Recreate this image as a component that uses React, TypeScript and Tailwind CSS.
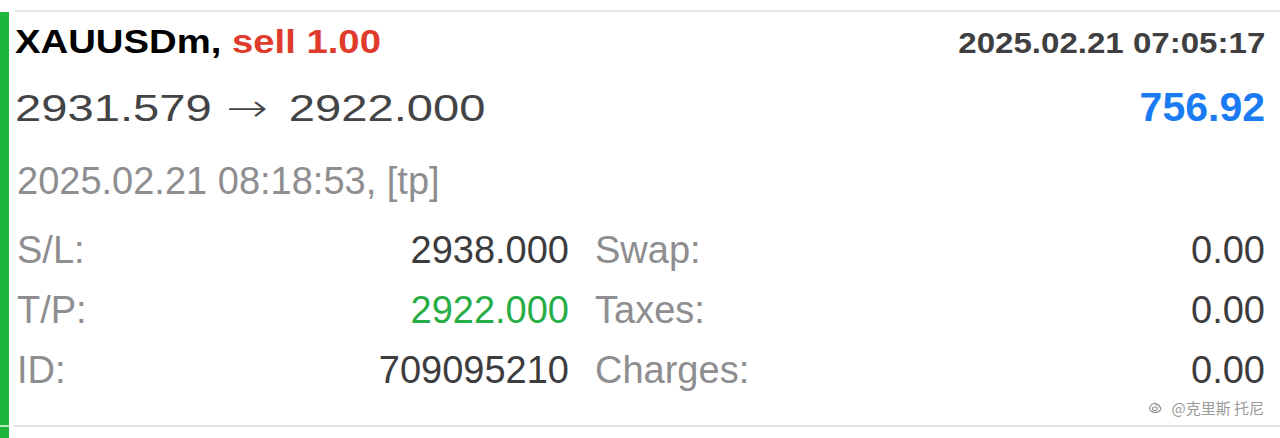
import React from "react";

const FONT = "font-['Liberation_Sans',Arial,sans-serif]";

type Row = {
  label: string;
  value: string;
  valueClass?: string;
  label2: string;
  value2: string;
};

const ROWS: Row[] = [
  { label: "S/L:", value: "2938.000", label2: "Swap:", value2: "0.00" },
  { label: "T/P:", value: "2922.000", valueClass: "text-[#27ad45]", label2: "Taxes:", value2: "0.00" },
  { label: "ID:", value: "709095210", label2: "Charges:", value2: "0.00" },
];

function WeiboMark() {
  return (
    <svg width="15" height="15" viewBox="0 0 14 14" fill="none" aria-hidden="true">
      <path
        d="M6.2 3.2C3.6 3.6 1.6 5.6 1.6 7.8c0 2.3 2.4 3.8 5 3.8 3 0 5.4-1.7 5.4-3.6 0-1.2-1-1.7-1.7-1.8.4-1 .1-2-1.3-1.8l-1.1.3c.3-1 0-1.7-1.7-1.5z"
        stroke="#8f8f8f"
        strokeWidth="1.1"
      />
      <ellipse cx="6.4" cy="8.2" rx="2.2" ry="1.6" stroke="#8f8f8f" strokeWidth="1" />
    </svg>
  );
}

export default function App() {
  return (
    <div className={`w-[1280px] h-[438px] bg-white overflow-hidden flex flex-col ${FONT}`}>
      <div className="h-[10px]" />
      <div className="flex h-[2px]">
        <div className="w-[15px]" />
        <div className="flex-1 bg-[#e6e6e6]" />
      </div>

      <div className="flex h-[413px]">
        <div className="w-[9px] bg-[#1db63c]" />
        <div className="flex-1 flex flex-col pl-[6px] pr-[15px]">
          <div className="flex justify-between items-baseline h-[60px]">
            <span className="inline-block origin-left scale-x-[1.16] text-[33px] leading-[60px] font-bold text-black whitespace-nowrap">
              XAUUSDm, <span className="text-[#de3b2c]">sell 1.00</span>
            </span>
            <span className="inline-block origin-right scale-x-[1.14] text-[29px] leading-[60px] font-bold text-[#3f3f41] whitespace-nowrap">
              2025.02.21 07:05:17
            </span>
          </div>

          <div className="flex justify-between items-baseline h-[71px]">
            <span className="inline-block origin-left scale-x-[1.31] text-[36px] leading-[71px] text-[#444446] whitespace-nowrap">
              2931.579{" "}
              <span className="ml-[1px] mr-[6px] font-['DejaVu_Sans',sans-serif] font-extralight text-[38px]">→</span>{" "}
              2922.000
            </span>
            <span className="text-[41px] leading-[71px] font-bold text-[#1a7bf2] whitespace-nowrap">
              756.92
            </span>
          </div>

          <div className="h-[77px] pl-[2px] text-[38px] leading-[77px] text-[#8e8e90] whitespace-nowrap">
            2025.02.21 08:18:53, [tp]
          </div>

          <div className="flex flex-col pl-[2px]">
            {ROWS.map((r) => (
              <div key={r.label} className="grid grid-cols-[552px_1fr] gap-x-[26px] h-[60px] text-[38px] leading-[60px]">
                <div className="flex justify-between">
                  <span className="text-[#8e8e90]">{r.label}</span>
                  <span className={r.valueClass ?? "text-[#3c3c3e]"}>{r.value}</span>
                </div>
                <div className="flex justify-between">
                  <span className="text-[#8e8e90]">{r.label2}</span>
                  <span className="text-[#3c3c3e]">{r.value2}</span>
                </div>
              </div>
            ))}
          </div>

          <div className="h-[25px] flex justify-end items-start gap-[8px] pr-[1px]">
            <WeiboMark />
            <span className="text-[15px] leading-[15px] text-[#9a9a9a] font-['Noto_Sans_CJK_SC',sans-serif]">
              @克里斯 托尼
            </span>
          </div>
        </div>
      </div>

      <div className="flex h-[2px]">
        <div className="w-[9px] bg-[#b9e6c3]" />
        <div className="w-[5px]" />
        <div className="flex-1 bg-[#e3e3e3]" />
      </div>
      <div className="flex flex-1">
        <div className="w-[9px] bg-[#1db63c]" />
      </div>
    </div>
  );
}
